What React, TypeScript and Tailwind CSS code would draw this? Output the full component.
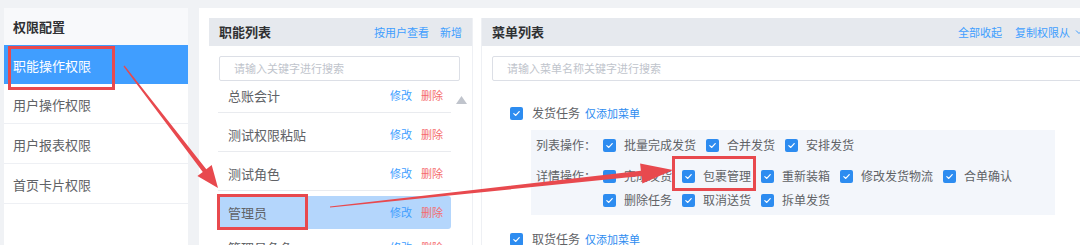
import type { ReactNode } from 'react';

const sideItems = ['职能操作权限', '用户操作权限', '用户报表权限', '首页卡片权限'];
const roles = ['总账会计', '测试权限粘贴', '测试角色', '管理员', '管理员角色'];

const listOps = ['批量完成发货', '合并发货', '安排发货'];
const detailOps = ['完成发货', '包裹管理', '重新装箱', '修改发货物流', '合单确认', '删除任务', '取消送货', '拆单发货'];

function Check() {
  return (
    <span className="w-[13px] h-[13px] shrink-0 rounded-[2px] bg-[#2d8cf0] flex items-center justify-center">
      <svg width="9" height="9" viewBox="0 0 10 10" fill="none">
        <path d="M2 5.2 L4.2 7.2 L8 2.8" stroke="#fff" strokeWidth="1.3" strokeLinecap="round" strokeLinejoin="round" />
      </svg>
    </span>
  );
}

function CheckItem({ label }: { label: string }) {
  return (
    <div className="flex items-center h-[24px] mr-[10px]">
      <Check />
      <span className="ml-[8px] text-[12px] text-[#606266] whitespace-nowrap">{label}</span>
    </div>
  );
}

function OpGroup({ label, items }: { label: string; items: string[] }) {
  return (
    <div className="flex">
      <div className="w-[67px] shrink-0 h-[24px] flex items-center text-[12px] text-[#606266]">{label}</div>
      <div className="flex flex-wrap flex-1">
        {items.map((i) => (
          <CheckItem key={i} label={i} />
        ))}
      </div>
    </div>
  );
}

function TaskRow({ title }: { title: string }) {
  return (
    <div className="flex items-center h-[24px]">
      <Check />
      <span className="ml-[9px] text-[12px] text-[#606266]">{title}</span>
      <span className="ml-[5px] text-[11px] text-[#2d8cf0]">仅添加菜单</span>
    </div>
  );
}

function PanelHeader({ title, children }: { title: string; children?: ReactNode }) {
  return (
    <div className="h-[28px] shrink-0 bg-[#e6e9ee] flex items-center justify-between px-[10px]">
      <span className="text-[13px] font-bold text-[#303133]">{title}</span>
      <div className="flex items-center gap-[11px] text-[11px] text-[#409eff]">{children}</div>
    </div>
  );
}

// tapered arrow outline, computed from endpoints
function arrowPoints(x1: number, y1: number, x2: number, y2: number, head: number, hw: number, w0: number, w1: number) {
  const dx = x2 - x1;
  const dy = y2 - y1;
  const len = Math.hypot(dx, dy);
  const ux = dx / len;
  const uy = dy / len;
  const nx = -uy;
  const ny = ux;
  const bx = x2 - ux * head;
  const by = y2 - uy * head;
  const pts = [
    [x1 + nx * w0, y1 + ny * w0],
    [bx + nx * w1, by + ny * w1],
    [bx + nx * hw, by + ny * hw],
    [x2, y2],
    [bx - nx * hw, by - ny * hw],
    [bx - nx * w1, by - ny * w1],
    [x1 - nx * w0, y1 - ny * w0],
  ];
  return pts.map((p) => `${p[0].toFixed(1)},${p[1].toFixed(1)}`).join(' ');
}

export default function App() {
  const red = '#e8494e';
  return (
    <div className="relative w-[1080px] h-[245px] overflow-hidden bg-[#f0f2f5] flex pt-[8px] pl-[4px] font-['Noto_Sans_CJK_SC','Noto_Sans',sans-serif]">
      {/* side menu */}
      <div className="w-[184px] shrink-0 bg-white">
        <div className="h-[37px] flex items-center px-[9px] text-[13px] font-bold text-[#303133] bg-[#f8f9fb]">权限配置</div>
        {sideItems.map((s, i) => (
          <div
            key={s}
            className={
              i === 0
                ? 'h-[39px] flex items-center pt-[2px] px-[9px] text-[13px] bg-[#409eff] text-white'
                : 'h-[40px] flex items-center pt-[3px] px-[9px] text-[13px] text-[#606266] border-b border-[#eef0f4]'
            }
          >
            {s}
          </div>
        ))}
      </div>

      <div className="ml-[11px] flex-1 bg-white flex pl-[10px] pt-[10px] overflow-hidden">
        {/* role list */}
        <div className="w-[264px] shrink-0 flex flex-col border-r border-[#eef0f4]">
          <PanelHeader title="职能列表">
            <span>按用户查看</span>
            <span>新增</span>
          </PanelHeader>
          <div className="shrink-0 pl-[10px] pr-[12px] mt-[10px]">
            <div className="h-[25px] border border-[#dcdfe6] rounded-[2px] flex items-center pl-[14px] text-[11px] text-[#c0c4cc]">
              请输入关键字进行搜索
            </div>
          </div>
          <div className="shrink-0 flex mt-[8px] h-[200px] overflow-hidden">
            <div className="w-[233px] ml-[9px] -mt-[15px]">
              {roles.map((r, i) => (
                <div
                  key={r}
                  className={
                    i === 3
                      ? 'h-[39px] pt-[5px]'
                      : i === 4
                        ? 'h-[39px] pt-[1px]'
                        : 'h-[39px] pt-[5px] border-b border-[#e9ebef]'
                  }
                >
                  <div
                    className={
                      'h-[33px] flex items-center justify-between pl-[10px] pr-[8px] rounded-[3px] ' +
                      (i === 3 ? 'bg-[#b4d6fc]' : '')
                    }
                  >
                    <span className="text-[13px] text-[#606266]">{r}</span>
                    <div className="flex gap-[9px] text-[11px]">
                      <span className="text-[#409eff]">修改</span>
                      <span className="text-[#f56c6c]">删除</span>
                    </div>
                  </div>
                </div>
              ))}
            </div>
            <div className="flex-1 flex justify-center pt-[7px]">
              <svg width="11" height="8" viewBox="0 0 11 8">
                <path d="M5.5 0 L11 8 L0 8 Z" fill="#c0c4cc" />
              </svg>
            </div>
          </div>
        </div>

        {/* menu list */}
        <div className="w-[613px] shrink-0 ml-[8px] border-l border-[#eef0f4] flex flex-col">
          <PanelHeader title="菜单列表">
            <span className="mr-[2px]">全部收起</span>
            <span className="flex items-center gap-[4px]">
              复制权限从
              <svg width="10" height="10" viewBox="0 0 10 10" fill="none">
                <path d="M2 3.5 L5 6.5 L8 3.5" stroke="#409eff" strokeWidth="1" />
              </svg>
            </span>
          </PanelHeader>
          <div className="shrink-0 px-[10px] mt-[10px]">
            <div className="h-[25px] border border-[#dcdfe6] rounded-[2px] flex items-center pl-[14px] text-[11px] text-[#c0c4cc]">
              请输入菜单名称关键字进行搜索
            </div>
          </div>
          <div className="shrink-0 pl-[28px] pt-[20px]">
            <TaskRow title="发货任务" />
            <div className="ml-[21px] mt-[5px] w-[524px] bg-[#f3f6fb] py-[3px] pl-[5px] pr-[4px] flex flex-col gap-[7px]">
              <OpGroup label="列表操作：" items={listOps} />
              <OpGroup label="详情操作：" items={detailOps} />
            </div>
            <div className="mt-[12px]">
              <TaskRow title="取货任务" />
            </div>
          </div>
        </div>
      </div>

      {/* annotations */}
      <svg className="absolute inset-0 pointer-events-none" width="1080" height="245">
        <rect x="9.5" y="47.5" width="104" height="41" fill="none" stroke={red} strokeWidth="3" />
        <rect x="218.5" y="195.5" width="88" height="33" fill="none" stroke={red} strokeWidth="3" />
        <rect x="673.5" y="157.5" width="81" height="32" fill="none" stroke={red} strokeWidth="3" />
        <polygon points={arrowPoints(124, 66, 218, 188, 22, 9, 0.6, 2.2)} fill={red} />
        <polygon points={arrowPoints(330, 207, 673, 170, 32, 10, 0.6, 2.6)} fill={red} />
      </svg>
    </div>
  );
}
